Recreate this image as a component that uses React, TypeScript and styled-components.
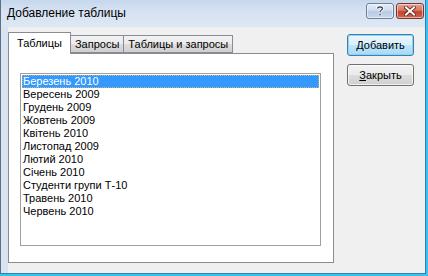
import styled, { createGlobalStyle } from 'styled-components';

const GlobalStyle = createGlobalStyle`
  html, body {
    margin: 0;
    padding: 0;
    background: #ffffff;
  }
  body {
    font-family: 'Liberation Sans', Arial, sans-serif;
    font-size: 11px;
    color: #000;
  }
`;

const Outer = styled.div`
  width: 428px;
  height: 276px;
  box-sizing: border-box;
  border-right: 2px solid #35c2ef;
  border-bottom: 2px solid #35c2ef;
`;

const Frame = styled.div`
  height: 100%;
  box-sizing: border-box;
  display: flex;
  flex-direction: column;
  border-left: 1px solid #5f6f86;
  border-right: 1px solid #2f7fb8;
  border-bottom: 1px solid #2f7fb8;
  background: #d9e4f2;
`;

const TitleBar = styled.div`
  height: 27px;
  flex: none;
  display: flex;
  align-items: center;
  padding-left: 6px;
  padding-right: 1px;
  background: linear-gradient(to bottom, #c6d7ec 0%, #d7e3f2 45%, #dde7f4 100%);
`;

const Title = styled.div`
  flex: 1;
  font-size: 12px;
  margin-top: -1px;
`;

const CaptionButton = styled.div<{ $close?: boolean }>`
  box-sizing: border-box;
  width: 28px;
  height: 16px;
  margin-left: 2px;
  margin-top: -6px;
  border-radius: 3px;
  border: 1px solid ${(p) => (p.$close ? '#7b3427' : '#6f7f96')};
  display: flex;
  align-items: center;
  justify-content: center;
  background: ${(p) =>
    p.$close
      ? 'linear-gradient(to bottom, #e8a394 0%, #d87762 45%, #c4452c 55%, #d2624a 100%)'
      : 'linear-gradient(to bottom, #e4ecf7 0%, #cfdcee 45%, #b8cbe4 55%, #c9d8ec 100%)'};
  box-shadow: inset 0 0 0 1px rgba(255, 255, 255, 0.5);
`;

const Client = styled.div`
  flex: 1;
  display: flex;
  margin-left: 7px;
  background: #f0f0f0;
  padding-top: 5px;
  padding-right: 8px;
`;

const TabArea = styled.div`
  width: 326px;
  display: flex;
  flex-direction: column;
`;

const TabStrip = styled.div`
  display: flex;
  align-items: flex-end;
  height: 21px;
  position: relative;
  z-index: 1;
`;

const Tab = styled.div<{ $active?: boolean }>`
  box-sizing: border-box;
  height: ${(p) => (p.$active ? 22 : 18)}px;
  margin-bottom: ${(p) => (p.$active ? -1 : 0)}px;
  margin-left: ${(p) => (p.$active ? 0 : -1)}px;
  padding: ${(p) => (p.$active ? '4px 8px 0 8px' : '2px 4px 0 4px')};
  border: 1px solid #898c95;
  border-bottom: ${(p) => (p.$active ? 'none' : '1px solid #898c95')};
  background: ${(p) =>
    p.$active ? '#ffffff' : 'linear-gradient(to bottom, #f2f2f2 0%, #ebebeb 50%, #dddddd 51%, #cfcfcf 100%)'};
  white-space: nowrap;
  &:first-child {
    margin-left: 0;
  }
`;

const Panel = styled.div`
  box-sizing: border-box;
  height: 210px;
  background: #ffffff;
  border: 1px solid #898c95;
  padding: 19px 0 0 11px;
`;

const ListBox = styled.div`
  box-sizing: border-box;
  width: 301px;
  height: 173px;
  border: 1px solid #a0a0a0;
  padding: 1px;
`;

const Item = styled.div<{ $selected?: boolean }>`
  box-sizing: border-box;
  height: 13px;
  line-height: 13px;
  padding-left: 1px;
  white-space: nowrap;
  color: ${(p) => (p.$selected ? '#ffffff' : '#000000')};
  background: ${(p) => (p.$selected ? '#3399ff' : 'transparent')};
  outline: ${(p) => (p.$selected ? '1px dotted #c9b27a' : 'none')};
  outline-offset: -1px;
`;

const ButtonColumn = styled.div`
  display: flex;
  flex-direction: column;
  gap: 8px;
  margin-left: 13px;
  padding-top: 2px;
`;

const Button = styled.div<{ $default?: boolean }>`
  box-sizing: border-box;
  width: 67px;
  height: 22px;
  display: flex;
  align-items: center;
  justify-content: center;
  border-radius: 3px;
  border: 1px solid ${(p) => (p.$default ? '#3c7fb1' : '#707070')};
  background: ${(p) =>
    p.$default
      ? 'linear-gradient(to bottom, #eaf6fd 0%, #d9f0fc 50%, #bee6fd 51%, #a7d9f5 100%)'
      : 'linear-gradient(to bottom, #f2f2f2 0%, #ebebeb 50%, #dddddd 51%, #cfcfcf 100%)'};
  box-shadow: inset 0 0 0 1px ${(p) => (p.$default ? '#8ed2f5' : 'rgba(255,255,255,0.7)')};
  padding-bottom: 1px;
`;

const items = [
  'Березень 2010',
  'Вересень 2009',
  'Грудень 2009',
  'Жовтень 2009',
  'Квітень 2010',
  'Листопад 2009',
  'Лютий 2010',
  'Січень 2010',
  'Студенти групи Т-10',
  'Травень 2010',
  'Червень 2010',
];

function HelpGlyph() {
  return (
    <svg width="10" height="11" viewBox="0 0 10 11">
      <path
        d="M2.5 3.5 C2.5 1.5 7.5 1.5 7.5 3.5 C7.5 5 5 5 5 7"
        fill="none"
        stroke="#ffffff"
        strokeWidth="3"
      />
      <path
        d="M2.5 3.5 C2.5 1.5 7.5 1.5 7.5 3.5 C7.5 5 5 5 5 7"
        fill="none"
        stroke="#3b4a60"
        strokeWidth="1.3"
      />
      <rect x="4" y="8.5" width="2" height="2" fill="#3b4a60" stroke="#fff" strokeWidth="0.5" />
    </svg>
  );
}

function CloseGlyph() {
  return (
    <svg width="12" height="10" viewBox="0 0 12 10">
      <path d="M2 1.5 L10 8.5 M10 1.5 L2 8.5" stroke="#5a1e14" strokeWidth="3.6" strokeLinecap="square" />
      <path d="M2 1.5 L10 8.5 M10 1.5 L2 8.5" stroke="#ffffff" strokeWidth="2" strokeLinecap="square" />
    </svg>
  );
}

export default function App() {
  return (
    <>
      <GlobalStyle />
      <Outer>
        <Frame>
          <TitleBar>
            <Title>Добавление таблицы</Title>
            <CaptionButton>
              <HelpGlyph />
            </CaptionButton>
            <CaptionButton $close>
              <CloseGlyph />
            </CaptionButton>
          </TitleBar>
          <Client>
            <TabArea>
              <TabStrip>
                <Tab $active>Таблицы</Tab>
                <Tab>Запросы</Tab>
                <Tab>Таблицы и запросы</Tab>
              </TabStrip>
              <Panel>
                <ListBox>
                  {items.map((name, i) => (
                    <Item key={name} $selected={i === 0}>
                      {name}
                    </Item>
                  ))}
                </ListBox>
              </Panel>
            </TabArea>
            <ButtonColumn>
              <Button $default>Добавить</Button>
              <Button>
                <span>
                  <u>З</u>акрыть
                </span>
              </Button>
            </ButtonColumn>
          </Client>
        </Frame>
      </Outer>
    </>
  );
}
